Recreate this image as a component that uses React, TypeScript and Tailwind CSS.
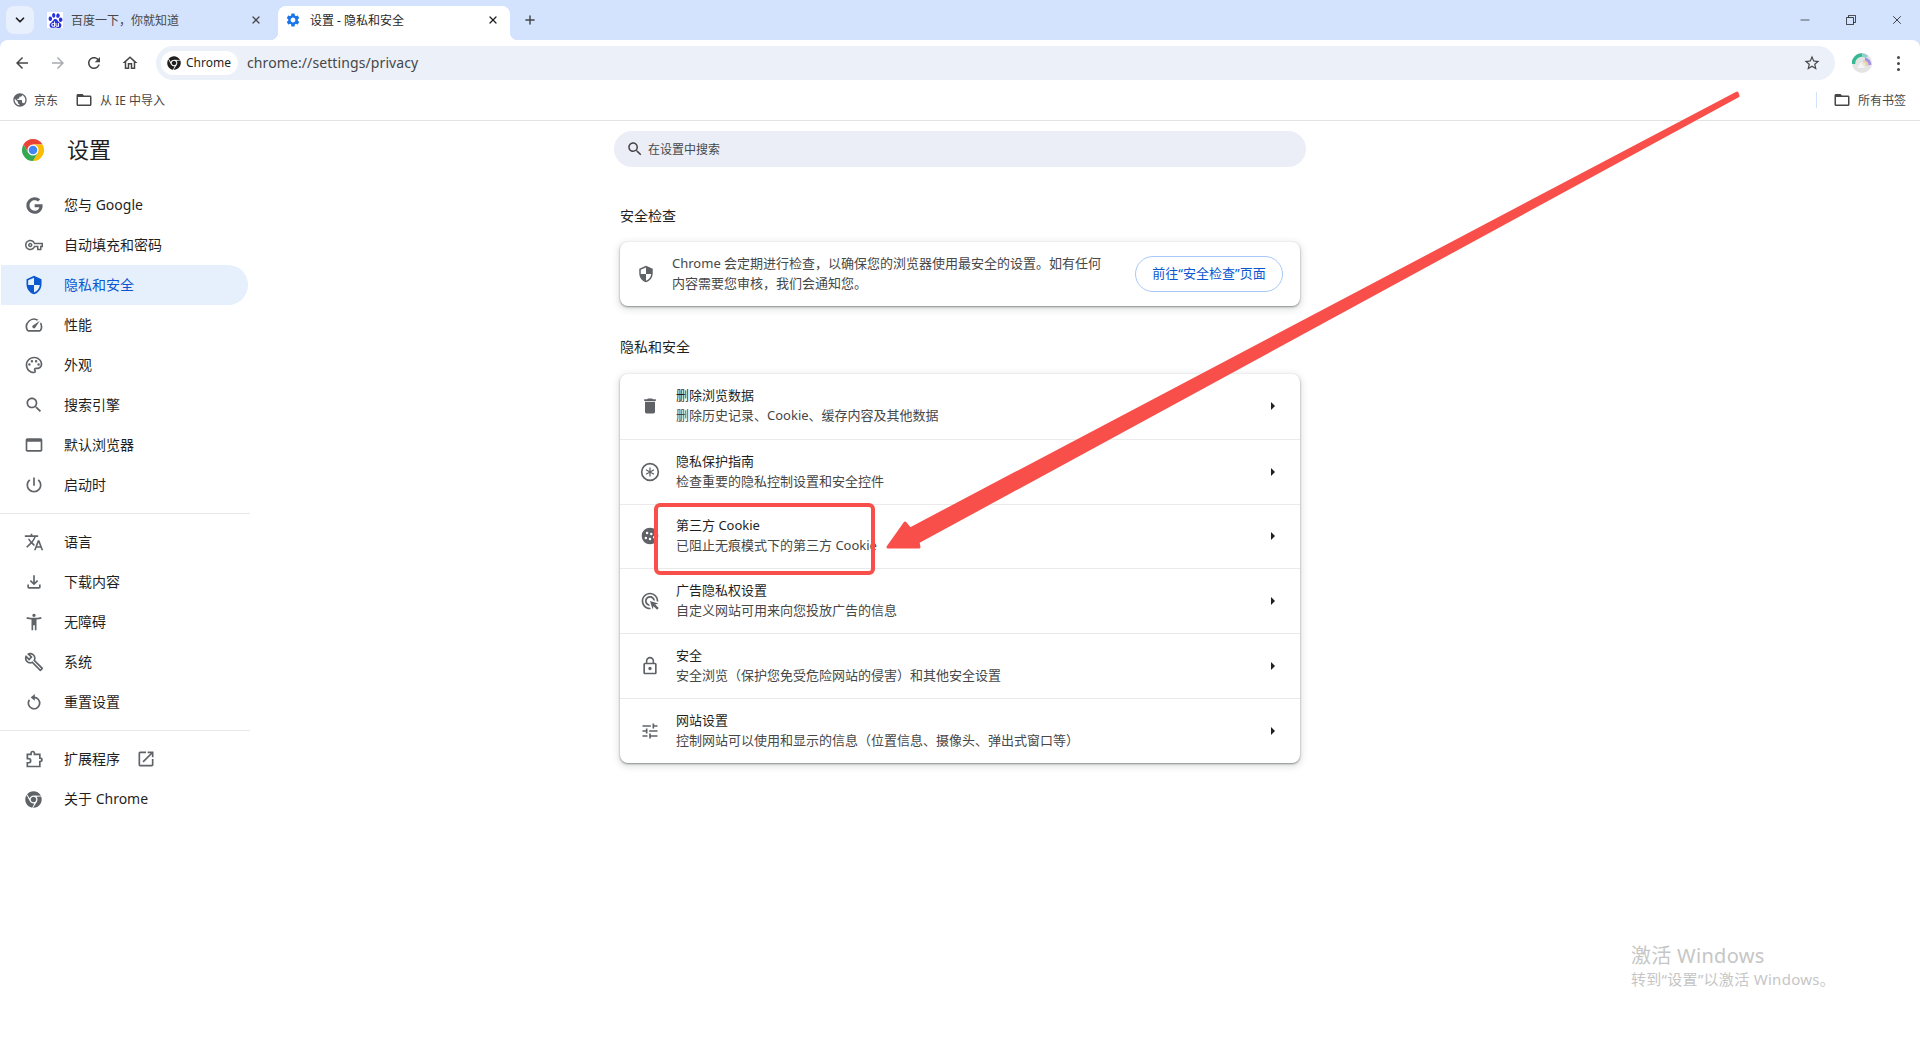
import React from "react";
import { FaChrome, FaGoogle } from "react-icons/fa";
import { SiBaidu } from "react-icons/si";
import { ChevronDown, Minus, Plus, X } from "lucide-react";

const Mi = ({ d, className = "" }: { d: string; className?: string }) => (
  <svg viewBox="0 0 24 24" fill="currentColor" className={className}>
    <path d={d} />
  </svg>
);

const icons = {
  back: "M20 11H7.83l5.59-5.59L12 4l-8 8 8 8 1.41-1.41L7.83 13H20v-2z",
  forward: "M12 4l-1.41 1.41L16.17 11H4v2h12.17l-5.58 5.59L12 20l8-8z",
  reload:
    "M17.65 6.35C16.2 4.9 14.21 4 12 4c-4.42 0-7.99 3.58-7.99 8s3.57 8 7.99 8c3.73 0 6.84-2.55 7.73-6h-2.08c-.82 2.33-3.04 4-5.65 4-3.31 0-6-2.69-6-6s2.69-6 6-6c1.66 0 3.14.69 4.22 1.78L13 11h7V4l-2.35 2.35z",
  home: "M12 5.69l5 4.5V18h-2v-6H9v6H7v-7.81l5-4.5M12 3L2 12h3v8h6v-6h2v6h6v-8h3L12 3z",
  star: "M22 9.24l-7.19-.62L12 2 9.19 8.63 2 9.24l5.46 4.73L5.82 21 12 17.27 18.18 21l-1.63-7.03L22 9.24zM12 15.4l-3.76 2.27 1-4.28-3.32-2.88 4.38-.38L12 6.1l1.71 4.04 4.38.38-3.32 2.88 1 4.28L12 15.4z",
  search:
    "M15.5 14h-.79l-.28-.27C15.41 12.59 16 11.11 16 9.5 16 5.91 13.09 3 9.5 3S3 5.91 3 9.5 5.91 16 9.5 16c1.61 0 3.09-.59 4.23-1.57l.27.28v.79l5 4.99L20.49 19l-4.99-5zm-6 0C7.01 14 5 11.99 5 9.5S7.01 5 9.5 5 14 7.01 14 9.5 11.99 14 9.5 14z",
  folder:
    "M20 6h-8l-2-2H4c-1.1 0-1.99.9-1.99 2L2 18c0 1.1.9 2 2 2h16c1.1 0 2-.9 2-2V8c0-1.1-.9-2-2-2zm0 12H4V8h16v10z",
  globe:
    "M12 2C6.48 2 2 6.48 2 12s4.48 10 10 10 10-4.48 10-10S17.52 2 12 2zm-1 17.93c-3.95-.49-7-3.85-7-7.93 0-.62.08-1.21.21-1.79L9 15v1c0 1.1.9 2 2 2v1.93zm6.9-2.54c-.26-.81-1-1.39-1.9-1.39h-1v-3c0-.55-.45-1-1-1H8v-2h2c.55 0 1-.45 1-1V7h2c1.1 0 2-.9 2-2v-.41c2.93 1.19 5 4.06 5 7.41 0 2.08-.8 3.97-2.1 5.39z",
  key: "M22 19h-6v-4h-2.68c-1.14 2.42-3.6 4-6.32 4-3.86 0-7-3.14-7-7s3.14-7 7-7c2.72 0 5.17 1.58 6.32 4H24v6h-2v4zm-4-2h2v-4h2v-2H11.94l-.23-.67C11.01 8.34 9.11 7 7 7c-2.76 0-5 2.24-5 5s2.24 5 5 5c2.11 0 4.01-1.34 4.71-3.33l.23-.67H18v4zM7 15c-1.65 0-3-1.35-3-3s1.35-3 3-3 3 1.35 3 3-1.35 3-3 3zm0-4c-.55 0-1 .45-1 1s.45 1 1 1 1-.45 1-1-.45-1-1-1z",
  shield:
    "M12 1 3 5v6c0 5.55 3.84 10.74 9 12 5.16-1.26 9-6.45 9-12V5l-9-4zm0 10.99h7c-.53 4.12-3.28 7.79-7 8.94V12H5V6.3l7-3.11v8.8z",
  speed:
    "M20.38 8.57l-1.23 1.85a8 8 0 0 1-.22 7.58H5.07A8 8 0 0 1 15.58 6.85l1.85-1.23A10 10 0 0 0 3.35 19a2 2 0 0 0 1.72 1h13.85a2 2 0 0 0 1.74-1 10 10 0 0 0-.27-10.44zm-9.79 6.84a2 2 0 0 0 2.83 0l5.66-8.49-8.49 5.66a2 2 0 0 0 0 2.83z",
  palette:
    "M12 22C6.49 22 2 17.51 2 12S6.49 2 12 2s10 4.04 10 9c0 3.31-2.69 6-6 6h-1.77c-.28 0-.5.22-.5.5 0 .12.05.23.13.33.41.47.64 1.06.64 1.67A2.5 2.5 0 0 1 12 22zm0-18c-4.41 0-8 3.59-8 8s3.59 8 8 8c.28 0 .5-.22.5-.5a.54.54 0 0 0-.14-.35c-.41-.46-.63-1.05-.63-1.65a2.5 2.5 0 0 1 2.5-2.5H16c2.21 0 4-1.79 4-4 0-3.86-3.59-7-8-7zM6.5 10a1.5 1.5 0 1 0 0 3 1.5 1.5 0 0 0 0-3zm3-4a1.5 1.5 0 1 0 0 3 1.5 1.5 0 0 0 0-3zm5 0a1.5 1.5 0 1 0 0 3 1.5 1.5 0 0 0 0-3zm3 4a1.5 1.5 0 1 0 0 3 1.5 1.5 0 0 0 0-3z",
  browser:
    "M20 4H4c-1.11 0-2 .9-2 2v12c0 1.1.89 2 2 2h16c1.1 0 2-.9 2-2V6c0-1.1-.89-2-2-2zm0 14H4V8h16v10z",
  power:
    "M13 3h-2v10h2V3zm4.83 2.17l-1.42 1.42C17.99 7.86 19 9.81 19 12c0 3.87-3.13 7-7 7s-7-3.13-7-7c0-2.19 1.01-4.14 2.58-5.42L6.17 5.17C4.23 6.82 3 9.26 3 12c0 4.97 4.03 9 9 9s9-4.03 9-9c0-2.74-1.23-5.18-3.17-6.83z",
  translate:
    "M12.87 15.07l-2.54-2.51.03-.03c1.74-1.94 2.98-4.17 3.71-6.53H17V4h-7V2H8v2H1v1.99h11.17C11.5 7.92 10.44 9.75 9 11.35 8.07 10.32 7.3 9.19 6.69 8h-2c.73 1.63 1.73 3.17 2.98 4.56l-5.09 5.02L4 19l5-5 3.11 3.11.76-2.04zM18.5 10h-2L12 22h2l1.12-3h4.75L21 22h2l-4.5-12zm-2.62 7l1.62-4.33L19.12 17h-3.24z",
  download:
    "M18 15v3H6v-3H4v3c0 1.1.9 2 2 2h12c1.1 0 2-.9 2-2v-3h-2zm-1-4l-1.41-1.41L13 12.17V4h-2v8.17L8.41 9.59 7 11l5 5 5-5z",
  person:
    "M20.5 6c-2.61.7-5.67 1-8.5 1s-5.89-.3-8.5-1L3 8c1.86.5 4 .83 6 1v13h2v-6h2v6h2V9c2-.17 4.14-.5 6-1l-.5-2zM12 6c1.1 0 2-.9 2-2s-.9-2-2-2-2 .9-2 2 .9 2 2 2z",
  wrench:
    "M22.61 18.99l-9.08-9.08c.93-2.34.45-5.1-1.44-7C9.79.61 6.21.4 3.66 2.26L7.5 6.11 6.08 7.52 2.25 3.69C.39 6.23.6 9.82 2.9 12.11c1.86 1.86 4.57 2.35 6.89 1.48l9.11 9.11c.39.39 1.02.39 1.41 0l2.3-2.3c.4-.38.4-1.01 0-1.41zm-3 1.6l-9.46-9.46c-.61.45-1.29.72-2 .82-1.36.2-2.79-.21-3.83-1.25C3.37 9.76 2.93 8.5 3 7.26l3.09 3.09 4.24-4.24-3.09-3.09c1.24-.07 2.49.37 3.44 1.31 1.08 1.08 1.49 2.57 1.24 3.96-.12.71-.42 1.37-.88 1.96l9.45 9.45-.88.88z",
  openNew:
    "M19 19H5V5h7V3H5c-1.11 0-2 .9-2 2v14c0 1.1.89 2 2 2h14c1.1 0 2-.9 2-2v-7h-2v7zM14 3v2h3.59l-9.83 9.83 1.41 1.41L19 6.41V10h2V3h-7z",
  gear: "M19.14 12.94c.04-.3.06-.61.06-.94 0-.32-.02-.64-.07-.94l2.03-1.58c.18-.14.23-.41.12-.61l-1.92-3.32c-.12-.22-.37-.29-.59-.22l-2.39.96c-.5-.38-1.03-.7-1.62-.94l-.36-2.54c-.04-.24-.24-.41-.48-.41h-3.84c-.24 0-.43.17-.47.41l-.36 2.54c-.59.24-1.13.57-1.62.94l-2.39-.96c-.22-.08-.47 0-.59.22L2.74 8.87c-.12.21-.08.47.12.61l2.03 1.58c-.05.3-.09.63-.09.94s.02.64.07.94l-2.03 1.58c-.18.14-.23.41-.12.61l1.92 3.32c.12.22.37.29.59.22l2.39-.96c.5.38 1.03.7 1.62.94l.36 2.54c.05.24.24.41.48.41h3.84c.24 0 .44-.17.47-.41l.36-2.54c.59-.24 1.13-.56 1.62-.94l2.39.96c.22.08.47 0 .59-.22l1.92-3.32c.12-.22.07-.47-.12-.61l-2.01-1.58zM12 15.6c-1.98 0-3.6-1.62-3.6-3.6s1.62-3.6 3.6-3.6 3.6 1.62 3.6 3.6-1.62 3.6-3.6 3.6z",
  trash:
    "M6 19c0 1.1.9 2 2 2h8c1.1 0 2-.9 2-2V7H6v12zM19 4h-3.5l-1-1h-5l-1 1H5v2h14V4z",
  ads: "M11.71 17.99C8.53 17.84 6 15.22 6 12c0-3.31 2.69-6 6-6 3.22 0 5.84 2.53 5.99 5.71l-2.1-.63C15.48 9.31 13.89 8 12 8c-2.21 0-4 1.79-4 4 0 1.89 1.31 3.48 3.08 3.89l.63 2.1zM22 12c0 .3-.01.6-.04.9l-1.97-.59c.01-.1.01-.21.01-.31 0-4.42-3.58-8-8-8s-8 3.58-8 8 3.58 8 8 8c.1 0 .21 0 .31-.01l.59 1.97c-.3.03-.6.04-.9.04-5.52 0-10-4.48-10-10S6.48 2 12 2s10 4.48 10 10zm-3.77 4.26L22 15l-10-3 3 10 1.26-3.77 4.27 4.27 1.98-1.98-4.28-4.26z",
  lock: "M12 17c1.1 0 2-.9 2-2s-.9-2-2-2-2 .9-2 2 .9 2 2 2zm6-9h-1V6c0-2.76-2.24-5-5-5S7 3.24 7 6v2H6c-1.1 0-2 .9-2 2v10c0 1.1.9 2 2 2h12c1.1 0 2-.9 2-2V10c0-1.1-.9-2-2-2zM8.9 6c0-1.71 1.39-3.1 3.1-3.1s3.1 1.39 3.1 3.1v2H8.9V6zM18 20H6V10h12v10z",
  tune: "M3 17v2h6v-2H3zM3 5v2h10V5H3zm10 16v-2h8v-2h-8v-2h-2v6h2zM7 9v2H3v2h4v2h2V9H7zm14 4v-2H11v2h10zm-6-4h2V7h4V5h-4V3h-2v6z",
  cookie:
    "M12 2a10 10 0 1 0 0 20 10 10 0 0 0 0-20zM8.5 7a1.5 1.5 0 1 1 0 3 1.5 1.5 0 0 1 0-3zm5 1a1.5 1.5 0 1 1 0 3 1.5 1.5 0 0 1 0-3zM7 13a1.5 1.5 0 1 1 0 3 1.5 1.5 0 0 1 0-3zm5 1a1.5 1.5 0 1 1 0 3 1.5 1.5 0 0 1 0-3zm5-2a1.5 1.5 0 1 1 0 3 1.5 1.5 0 0 1 0-3z",
};

const GuideIcon = ({ className = "" }: { className?: string }) => (
  <svg viewBox="0 0 24 24" fill="none" stroke="currentColor" className={className}>
    <circle cx="12" cy="12" r="10" strokeWidth="2" />
    <path d="M12 6.5v11M7.2 9.2l9.6 5.6M7.2 14.8l9.6-5.6" strokeWidth="1.5" />
  </svg>
);

const ResetIcon = ({ className = "" }: { className?: string }) => (
  <svg viewBox="0 0 24 24" fill="none" stroke="currentColor" className={className}>
    <path d="M12 6.5a6.8 6.8 0 1 1-5.5 2.8" strokeWidth="2" />
    <path d="M13 2.5v8L8 6.5z" fill="currentColor" stroke="none" />
  </svg>
);

const ExtensionIcon = ({ className = "" }: { className?: string }) => (
  <svg viewBox="0 0 24 24" fill="none" stroke="currentColor" strokeWidth="2" className={className}>
    <path d="M4 6.5h4.5V5a2 2 0 0 1 4 0v1.5H19V11h.5a2 2 0 0 1 0 4H19v6H4v-4.5h1.5a2.5 2.5 0 0 0 0-5H4z" />
  </svg>
);

const ChromeLogo = () => (
  <svg viewBox="0 0 24 24" className="w-[24px] h-[24px]">
    <path fill="#ea4335" d="M21.53 6.5A11 11 0 0 0 2.47 6.5L7.24 14.75 12 6.5Z" />
    <path fill="#fbbc04" d="M12 23A11 11 0 0 0 21.53 6.5H12L16.76 14.75Z" />
    <path fill="#34a853" d="M2.47 6.5A11 11 0 0 0 12 23L16.76 14.75H7.24Z" />
    <circle cx="12" cy="12" r="5.5" fill="#fff" />
    <circle cx="12" cy="12" r="4.3" fill="#4285f4" />
  </svg>
);

const Avatar = () => (
  <svg viewBox="0 0 20 20" className="w-[20px] h-[20px]">
    <circle cx="10" cy="10" r="10" fill="#e4e4e4" />
    <path d="M1.5 11A8.5 8.5 0 0 1 10 2" fill="none" stroke="#36b894" strokeWidth="3.5" />
    <path d="M10 2A8.5 8.5 0 0 1 15 4" fill="none" stroke="#8fd0c8" strokeWidth="3.5" />
    <path d="M13 6A7 7 0 0 1 18 12" fill="none" stroke="#a394e6" strokeWidth="3" />
    <path d="M11 8A5 5 0 0 1 15 13" fill="none" stroke="#f0cf9a" strokeWidth="2" />
    <path d="M5 15L9 9 13 15Z" fill="#f5f5f5" />
  </svg>
);

const menuA = [
  { label: "您与 Google", google: true },
  { label: "自动填充和密码", icon: icons.key, small: true },
  { label: "隐私和安全", icon: icons.shield, active: true },
  { label: "性能", icon: icons.speed },
  { label: "外观", icon: icons.palette },
  { label: "搜索引擎", icon: icons.search },
  { label: "默认浏览器", icon: icons.browser },
  { label: "启动时", icon: icons.power },
];

const menuB = [
  { label: "语言", icon: icons.translate },
  { label: "下载内容", icon: icons.download },
  { label: "无障碍", icon: icons.person },
  { label: "系统", icon: icons.wrench },
  { label: "重置设置", reset: true },
];

const rows = [
  { title: "删除浏览数据", sub: "删除历史记录、Cookie、缓存内容及其他数据", icon: icons.trash },
  { title: "隐私保护指南", sub: "检查重要的隐私控制设置和安全控件", guide: true },
  { title: "第三方 Cookie", sub: "已阻止无痕模式下的第三方 Cookie", icon: icons.cookie },
  { title: "广告隐私权设置", sub: "自定义网站可用来向您投放广告的信息", icon: icons.ads },
  { title: "安全", sub: "安全浏览（保护您免受危险网站的侵害）和其他安全设置", icon: icons.lock },
  { title: "网站设置", sub: "控制网站可以使用和显示的信息（位置信息、摄像头、弹出式窗口等）", icon: icons.tune },
];

const SideIcon = ({ item }: { item: any }) => {
  if (item.google) return <FaGoogle className="w-[17px] h-[17px] ml-[2px]" />;
  if (item.reset) return <ResetIcon className="w-[20px] h-[20px]" />;
  if (item.small) return <Mi d={item.icon} className="w-[18px] h-[18px] ml-px" />;
  return <Mi d={item.icon} className="w-[20px] h-[20px]" />;
};

const SideItem = ({ item }: { item: any }) => (
  <div
    className={
      "flex items-center h-10 text-[14px] " +
      (item.active
        ? "ml-px w-[247px] pl-[23px] rounded-r-full bg-[#e6effc] text-[#0b57d0]"
        : "pl-[24px] text-[#1f1f1f]")
    }
  >
    <span className={"w-[40px] shrink-0 " + (item.active ? "" : "text-[#5f6368]")}>
      <SideIcon item={item} />
    </span>
    <span className="pb-[2px]">{item.label}</span>
  </div>
);

export default function App() {
  return (
    <div className="relative w-full h-screen overflow-hidden bg-white font-['Noto_Sans','Noto_Sans_CJK_SC',sans-serif]">
      {/* browser chrome */}
      <div className="bg-[#d3e3fd]">
        <div className="flex h-10 items-end pl-[6px]">
          <div className="flex items-center justify-center w-[28px] h-[28px] mb-[6px] rounded-lg bg-[#e8f0fe] text-[#1f1f1f]">
            <ChevronDown className="w-[14px] h-[14px]" strokeWidth={3} />
          </div>
          <div className="flex items-center h-[34px] w-[244px] pl-[13px] pb-[6px] text-[12px] text-[#474747]">
            <span className="flex items-center justify-center w-[16px] h-[16px] bg-white">
              <SiBaidu className="w-[15px] h-[15px] text-[#2932e1]" />
            </span>
            <span className="ml-[8px] flex-1 pt-px">百度一下，你就知道</span>
            <X className="w-[12px] h-[12px] mr-[16px] text-[#474747]" strokeWidth={2.5} />
          </div>
          <div className="relative flex items-center h-[34px] w-[232px] pl-[7px] pb-[6px] rounded-t-lg bg-white text-[12px] text-[#1f1f1f]">
            <span className="absolute -left-2 bottom-0 w-2 h-2 bg-[radial-gradient(circle_at_0_0,transparent_8px,white_8.5px)]" />
            <span className="absolute -right-2 bottom-0 w-2 h-2 bg-[radial-gradient(circle_at_100%_0,transparent_8px,white_8.5px)]" />
            <Mi d={icons.gear} className="w-[16px] h-[16px] text-[#1a73e8]" />
            <span className="ml-[9px] flex-1 pt-px">设置 - 隐私和安全</span>
            <X className="w-[12px] h-[12px] mr-[11px] text-[#1f1f1f]" strokeWidth={2.5} />
          </div>
          <Plus className="w-[14px] h-[14px] ml-[13px] mb-[13px] text-[#474747]" strokeWidth={2.5} />
          <div className="flex-1" />
          <div className="flex items-center h-10 pr-[16px] gap-[34px] text-[#1f1f1f]">
            <Minus className="w-[14px] h-[14px]" strokeWidth={1.2} />
            <svg viewBox="0 0 12 12" fill="none" stroke="currentColor" className="w-[10px] h-[10px]">
              <path d="M.5 3h8.5v8.5H.5zM3 3V.5h8.5V9H9" />
            </svg>
            <X className="w-[14px] h-[14px]" strokeWidth={1.4} />
          </div>
        </div>

        <div className="bg-white rounded-t-lg">
          <div className="flex items-start h-[44px] pt-[6px]">
            <div className="flex items-center h-[34px] w-[156px] text-[#474747]">
              <Mi d={icons.back} className="w-[18px] h-[18px] ml-[13px]" />
              <Mi d={icons.forward} className="w-[18px] h-[18px] ml-[18px] text-[#a8abaf]" />
              <Mi d={icons.reload} className="w-[18px] h-[18px] ml-[18px]" />
              <Mi d={icons.home} className="w-[18px] h-[18px] ml-[18px]" />
            </div>
            <div className="flex items-center w-[1679px] h-[34px] rounded-full bg-[#ebf0f9] pl-[5px] pr-[14px]">
              <div className="flex items-center w-[77px] h-[24px] rounded-full bg-white pl-[6px] text-[12px] text-[#1f1f1f]">
                <FaChrome className="w-[14px] h-[14px] mr-[5px]" />
                Chrome
              </div>
              <span className="ml-[9px] flex-1 pb-[2px] text-[14px] tracking-[0.1px] text-[#474747]">chrome://settings/privacy</span>
              <Mi d={icons.star} className="w-[18px] h-[18px] text-[#474747]" />
            </div>
            <div className="flex items-center h-[34px] pl-[17px]">
              <Avatar />
              <span className="ml-[25px] flex flex-col gap-[3px]">
                <i className="w-[3px] h-[3px] rounded-full bg-[#474747]" />
                <i className="w-[3px] h-[3px] rounded-full bg-[#474747]" />
                <i className="w-[3px] h-[3px] rounded-full bg-[#474747]" />
              </span>
            </div>
          </div>

          <div className="flex items-center h-[37px] pb-[5px] border-b border-[#e3e3e3] text-[12px] text-[#474747]">
            <Mi d={icons.globe} className="w-[16px] h-[16px] ml-[12px] text-[#5f6368]" />
            <span className="ml-[6px] pt-[2px]">京东</span>
            <Mi d={icons.folder} className="w-[18px] h-[18px] ml-[17px] text-[#474747]" />
            <span className="ml-[7px] pt-[2px]">从 IE 中导入</span>
            <div className="flex-1" />
            <span className="w-px h-[16px] bg-[#d3e3fd]" />
            <Mi d={icons.folder} className="w-[18px] h-[18px] ml-[16px]" />
            <span className="ml-[7px] mr-[14px] pt-[2px]">所有书签</span>
          </div>
        </div>
      </div>

      {/* settings page */}
      <div className="grid grid-cols-[250px_1fr_250px]">
        <aside>
          <div className="flex items-center h-[57px] pl-[21px]">
            <ChromeLogo />
            <span className="ml-[22px] text-[22px] text-[#1f1f1f]">设置</span>
          </div>
          <nav className="mt-[7px]">
            {menuA.map((m) => (
              <SideItem key={m.label} item={m} />
            ))}
          </nav>
          <div className="mt-2 border-t border-[#e8e8e8]" />
          <nav className="mt-2">
            {menuB.map((m) => (
              <SideItem key={m.label} item={m} />
            ))}
          </nav>
          <div className="mt-2 border-t border-[#e8e8e8]" />
          <nav className="mt-2">
            <div className="flex items-center h-10 pl-[24px] text-[14px] text-[#1f1f1f]">
              <ExtensionIcon className="w-[20px] h-[20px] mr-[20px] text-[#5f6368]" />
              <span className="pb-[2px]">扩展程序</span>
              <Mi d={icons.openNew} className="w-[20px] h-[20px] ml-[16px] text-[#5f6368]" />
            </div>
            <div className="flex items-center h-10 pl-[25px] text-[14px] text-[#1f1f1f]">
              <FaChrome className="w-[17px] h-[17px] mr-[22px] text-[#5f6368]" />
              <span className="pb-[2px]">关于 Chrome</span>
            </div>
          </nav>
        </aside>

        <main className="flex flex-col items-center pt-[10px]">
          <div className="flex items-center w-[692px] h-[36px] rounded-full bg-[#ebeef7] pl-[12px] text-[12px] text-[#474747]">
            <Mi d={icons.search} className="w-[18px] h-[18px] text-[#474747]" />
            <span className="ml-[4px] pt-[2px]">在设置中搜索</span>
          </div>

          <div className="w-[680px]">
            <h2 className="mt-10 h-5 text-[14px] leading-[18px] text-[#1f1f1f]">安全检查</h2>
            <div className="mt-[15px] flex items-center h-[64px] rounded-lg bg-white pl-[17px] pr-[17px] shadow-[0_1px_2px_rgba(60,64,67,0.55),0_2px_6px_2px_rgba(60,64,67,0.15)]">
              <Mi d={icons.shield} className="w-[18px] h-[18px] text-[#5f6368]" />
              <p className="ml-[17px] mb-[2px] w-[440px] text-[13px] leading-[20px] text-[#474747]">
                Chrome 会定期进行检查，以确保您的浏览器使用最安全的设置。如有任何内容需要您审核，我们会通知您。
              </p>
              <div className="flex-1" />
              <div className="flex items-center justify-center w-[148px] h-[36px] rounded-full border border-[#a8c7fa] text-[13px] text-[#0b57d0]">
                前往“安全检查”页面
              </div>
            </div>

            <h2 className="mt-8 h-5 text-[14px] leading-[18px] text-[#1f1f1f]">隐私和安全</h2>
            <div className="mt-4 rounded-lg bg-white shadow-[0_1px_2px_rgba(60,64,67,0.55),0_2px_6px_2px_rgba(60,64,67,0.15)]">
              {rows.map((r, i) => (
                <div
                  key={r.title}
                  className={
                    "flex items-center h-[64.8px] pl-[20px] pr-[25px] " +
                    (i > 0 ? "border-t border-[#eaeaea]" : "")
                  }
                >
                  <span className="w-[36px] shrink-0 text-[#5f6368]">
                    {r.guide ? (
                      <GuideIcon className="w-[20px] h-[20px]" />
                    ) : (
                      <Mi d={r.icon as string} className="w-[20px] h-[20px]" />
                    )}
                  </span>
                  <div className="flex-1 pb-[2px] text-[13px] leading-[20px]">
                    <div className="text-[#1f1f1f]">{r.title}</div>
                    <div className="text-[#474747]">{r.sub}</div>
                  </div>
                  <span className="w-0 h-0 border-y-[4px] border-y-transparent border-l-[4px] border-l-[#1f1f1f]" />
                </div>
              ))}
            </div>
          </div>
        </main>
        <div />
      </div>

      {/* annotation painted on top of the screenshot */}
      <div className="absolute left-[654px] top-[503px] w-[221px] h-[72px] rounded-[6px] border-4 border-[#f94f4a]" />
      <svg className="absolute left-0 top-0 w-[1920px] h-[1040px] pointer-events-none">
        <polygon
          points="1737,93 1738,96 918,542 919,547 888,547 905,523 910,529"
          fill="#f94f4a"
          stroke="#f94f4a"
          strokeWidth="3"
          strokeLinejoin="round"
        />
      </svg>

      {/* windows watermark */}
      <div className="absolute left-[1631px] top-[941px] text-[#c6c6c6]">
        <div className="text-[20px] leading-[30px] tracking-[0.3px]">激活 Windows</div>
        <div className="text-[15px] leading-[17px] tracking-[0.3px]">转到“设置”以激活 Windows。</div>
      </div>
    </div>
  );
}
